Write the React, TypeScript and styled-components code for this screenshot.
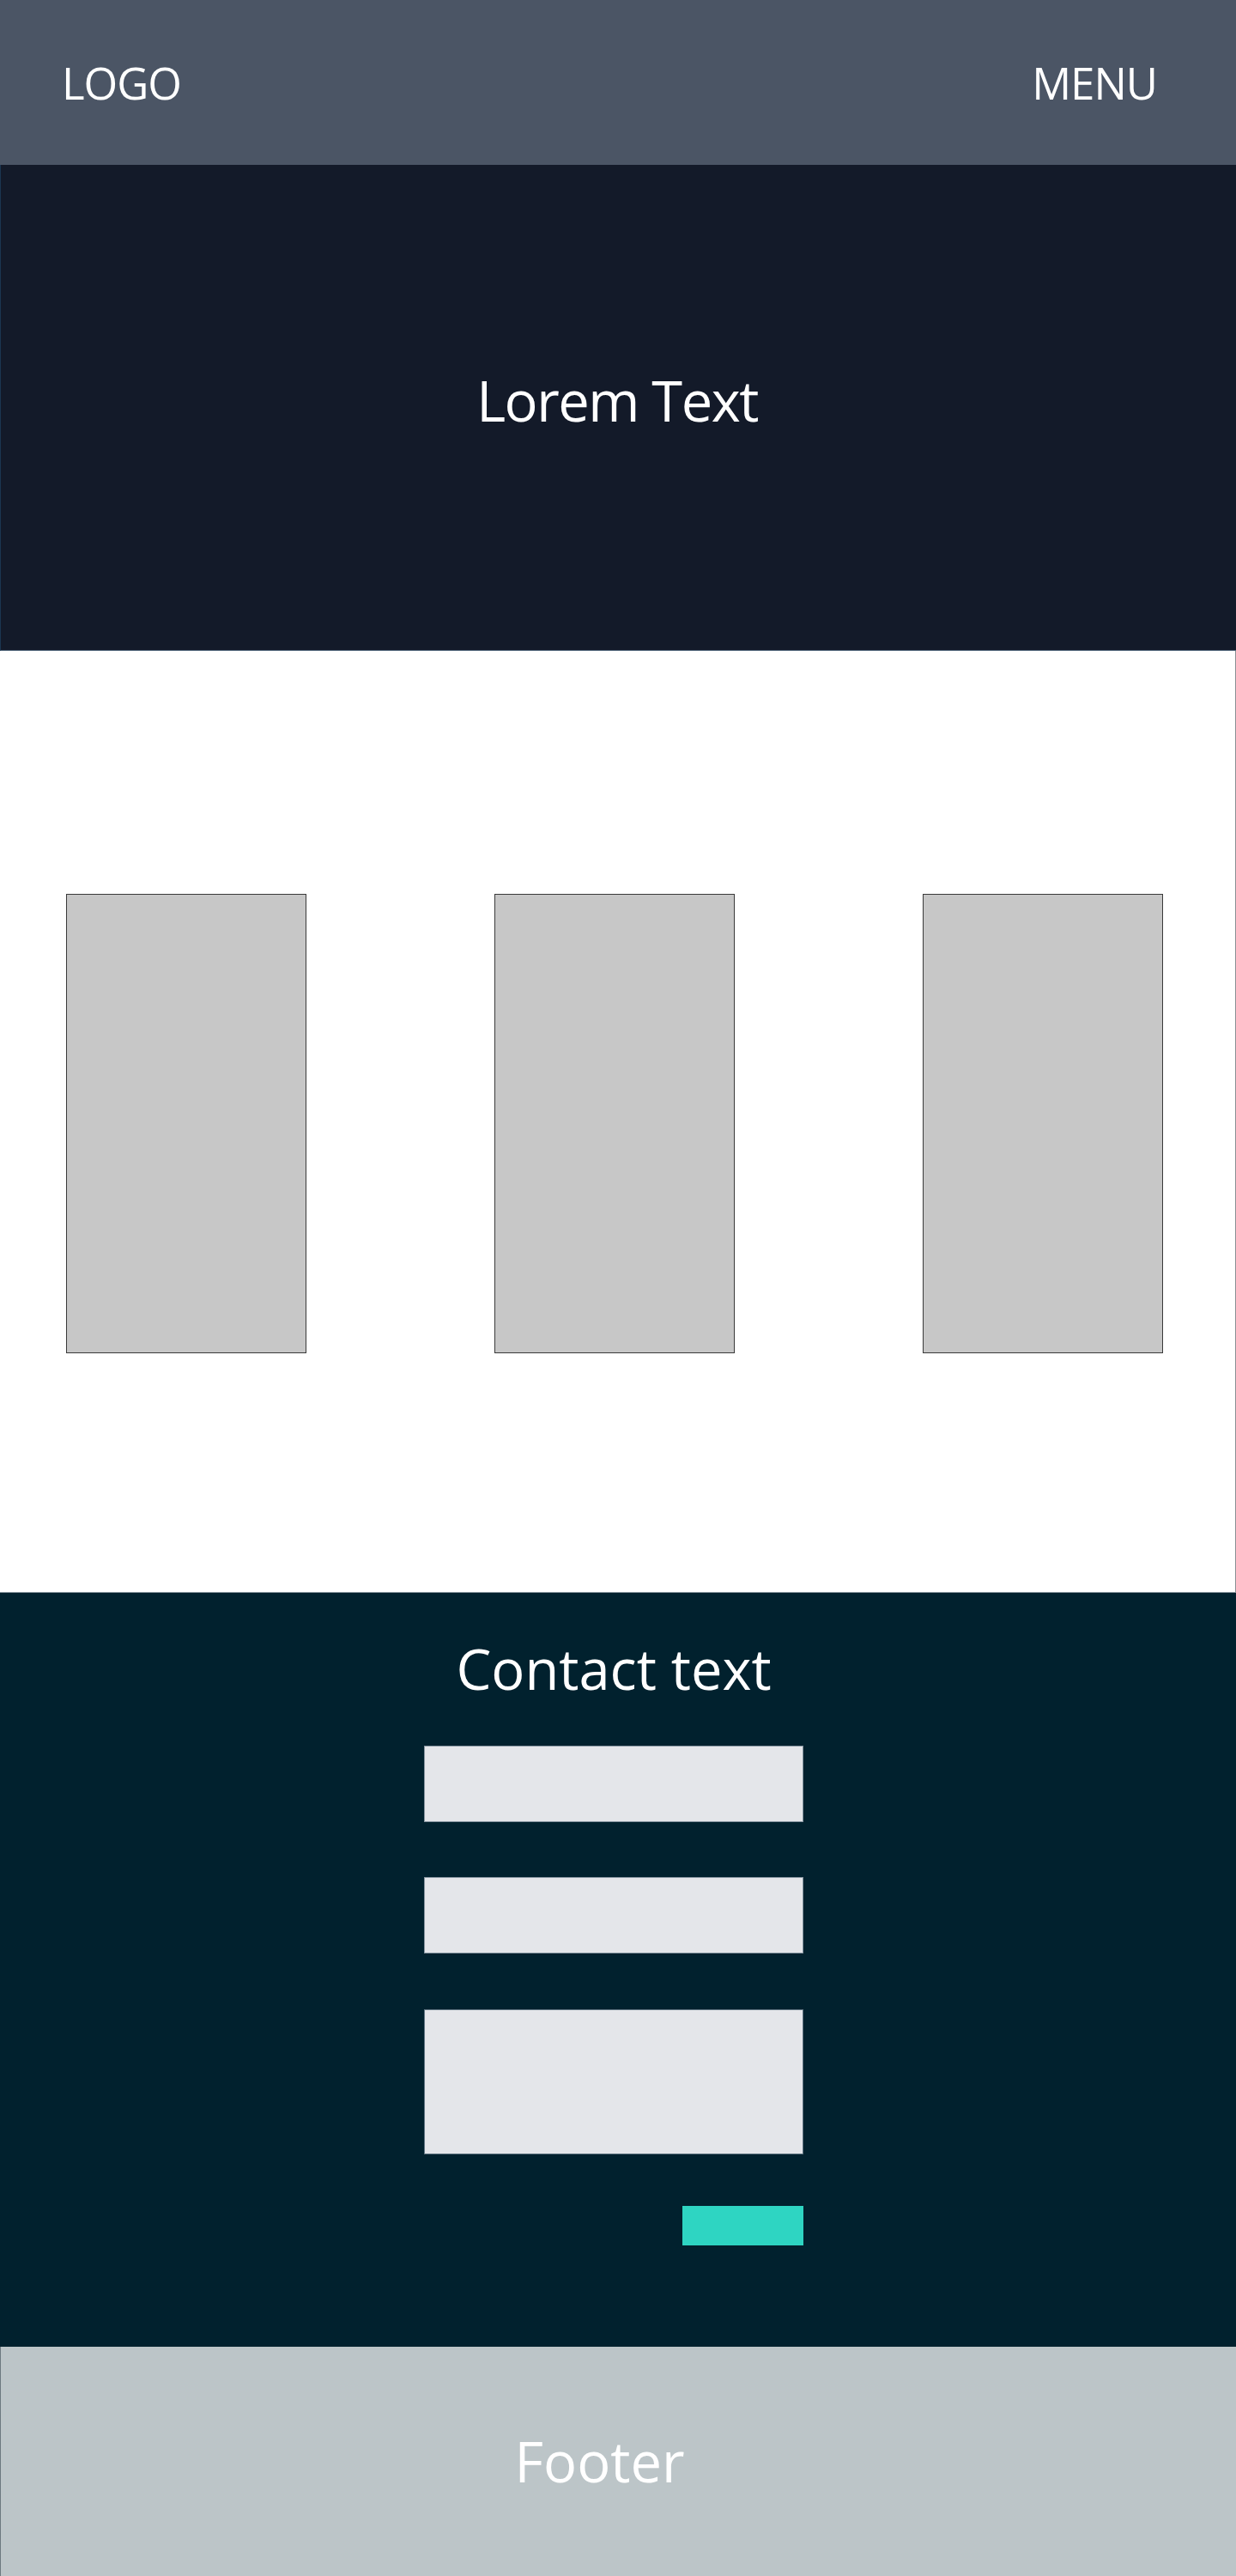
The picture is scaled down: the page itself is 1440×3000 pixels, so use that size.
import React from "react";
import styled, { createGlobalStyle } from "styled-components";

const GlobalStyle = createGlobalStyle`
  html, body {
    margin: 0;
    padding: 0;
    background: #ffffff;
  }
  * {
    box-sizing: border-box;
  }
  body {
    font-family: "Open Sans", "Liberation Sans", Arial, sans-serif;
  }
`;

const Page = styled.div`
  display: flex;
  flex-direction: column;
  width: 1440px;
`;

const Header = styled.header`
  height: 192px;
  background: #4b5565;
  display: flex;
  align-items: center;
  justify-content: space-between;
  padding: 0 92px 0 72px;
`;

const NavText = styled.span`
  color: #ffffff;
  font-size: 51px;
  line-height: 1;
  letter-spacing: -1px;
  font-weight: 400;
`;

const Hero = styled.section`
  height: 566px;
  background: #131a29;
  border-left: 1px solid #1b3550;
  border-bottom: 1px solid #4f6478;
  display: flex;
  align-items: center;
  justify-content: center;
  padding: 0 3px 16px 0;
`;

const Heading = styled.h1<{ $spacing?: number }>`
  margin: 0;
  color: #ffffff;
  font-size: 65px;
  line-height: 1;
  font-weight: 400;
  letter-spacing: ${(p) => p.$spacing ?? 0}px;
`;

const Cards = styled.section`
  height: 1097px;
  background: #ffffff;
  border-right: 1px solid #8a8f94;
  border-bottom: 1px solid #8a979f;
  display: flex;
  align-items: flex-start;
  gap: 219px;
  padding: 283px 0 0 77px;
`;

const Card = styled.div`
  width: 280px;
  height: 535px;
  background: #c7c7c7;
  border: 1px solid #3a3a3a;
`;

const Contact = styled.section`
  height: 878px;
  background: #01212e;
  display: flex;
  flex-direction: column;
  align-items: center;
  padding: 56px 10px 0 0;
`;

const Form = styled.form`
  width: 442px;
  margin-top: 57px;
  display: flex;
  flex-direction: column;
  gap: 64px;
`;

const Field = styled.input`
  display: block;
  width: 100%;
  height: 89px;
  margin: 0;
  padding: 0 16px;
  background: #e4e6ea;
  border: 1px solid #8795a0;
  border-radius: 0;
  outline: none;
  font-family: inherit;
`;

const Area = styled.textarea`
  display: block;
  width: 100%;
  height: 169px;
  margin: 1px 0 0;
  padding: 16px;
  background: #e4e6ea;
  border: 1px solid #5f7381;
  border-radius: 0;
  outline: none;
  resize: none;
  font-family: inherit;
`;

const Submit = styled.button`
  align-self: flex-end;
  width: 141px;
  height: 46px;
  margin-top: -4px;
  background: #2ed5c2;
  border: none;
  border-radius: 0;
  padding: 0;
  cursor: pointer;
`;

const Footer = styled.footer`
  height: 267px;
  background: #bcc5c8;
  border-left: 1px solid #6d7a80;
  display: flex;
  align-items: center;
  justify-content: center;
  padding-right: 44px;
`;

export default function App() {
  return (
    <>
      <GlobalStyle />
      <Page>
        <Header>
          <NavText>LOGO</NavText>
          <NavText>MENU</NavText>
        </Header>
        <Hero>
          <Heading $spacing={-1.5}>Lorem Text</Heading>
        </Hero>
        <Cards>
          <Card />
          <Card />
          <Card />
        </Cards>
        <Contact>
          <Heading as="h2">Contact text</Heading>
          <Form onSubmit={(e) => e.preventDefault()}>
            <Field type="text" aria-label="Name" />
            <Field type="email" aria-label="Email" />
            <Area aria-label="Message" />
            <Submit type="submit" aria-label="Send" />
          </Form>
        </Contact>
        <Footer>
          <Heading as="p">Footer</Heading>
        </Footer>
      </Page>
    </>
  );
}
